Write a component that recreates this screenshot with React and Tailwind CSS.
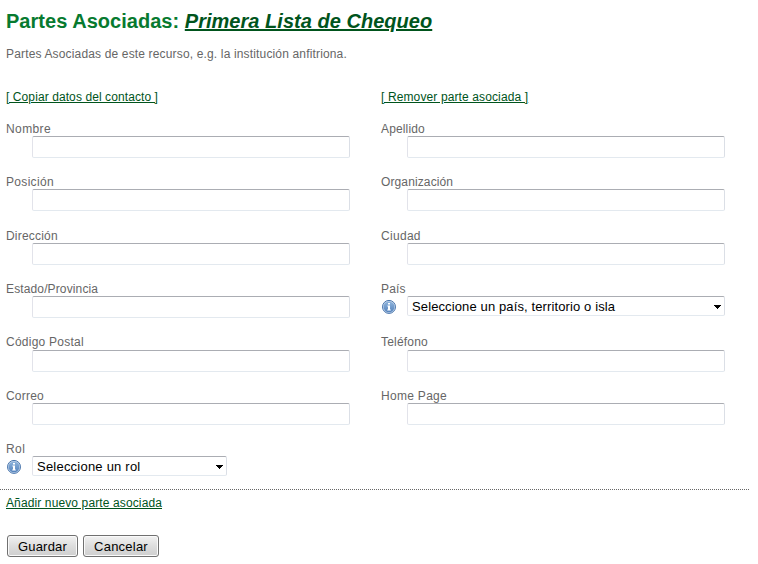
import React from "react";

function InfoIcon() {
  return (
    <svg className="mt-[3px] h-[15px] w-[15px] shrink-0" viewBox="0 0 15 15">
      <defs>
        <linearGradient id="info" x1="0" y1="0" x2="0" y2="1">
          <stop offset="0" stopColor="#8fb4dc" />
          <stop offset="1" stopColor="#5583bd" />
        </linearGradient>
      </defs>
      <circle cx="7" cy="7.9" r="6.5" fill="#c3d5ea" stroke="#4a76ad" strokeWidth="1" />
      <circle cx="7" cy="7.9" r="5.4" fill="url(#info)" />
      <path d="M6 4h2v1.6H6zM5.4 6.6H8v4h.8v.9H5.2v-.9H6V7.5h-.6z" fill="#fff" />
    </svg>
  );
}

function Label({ children, spacing = "", height = "h-[14px]" }) {
  return <div className={`whitespace-nowrap text-[12px] leading-[14px] text-[#666] ${height} ${spacing}`}>{children}</div>;
}

const fieldBorder = "rounded-[2px] border border-[#e2e3ea] border-t-[#abadb3] border-r-[#dbdfe6] border-b-[#e3e9ef] bg-white";

function Field({ label, spacing, labelHeight }) {
  return (
    <div className="w-[344px]">
      <Label spacing={spacing} height={labelHeight}>{label}</Label>
      <input className={`ml-[26px] block h-[22px] w-[318px] outline-none ${fieldBorder}`} />
    </div>
  );
}

function SelectField({ label, value, width, spacing, labelSpacing }) {
  return (
    <div className="w-[344px]">
      <Label spacing={labelSpacing}>{label}</Label>
      <div className="flex">
        <div className="flex w-[26px] pl-px">
          <InfoIcon />
        </div>
        <div className={`flex h-5 items-start justify-between pl-1 pr-[3px] text-black ${width} ${fieldBorder}`}>
          <span className={`whitespace-nowrap pt-px text-[13px] leading-[18px] ${spacing}`}>{value}</span>
          <svg className="mt-2 h-1 w-[7px]" viewBox="0 0 7 4" shapeRendering="crispEdges">
            <path d="M0 0h7v1H6v1H5v1H4v1H3V3H2V2H1V1H0z" />
          </svg>
        </div>
      </div>
    </div>
  );
}

function Button({ children, width }) {
  return (
    <button className={`h-[22px] rounded-[3px] border border-[#707070] bg-linear-to-b from-[#f2f2f2] from-0% via-[#dddddd] via-50% to-[#cfcfcf] text-[13px] leading-[19px] tracking-[0.22px] text-black shadow-[inset_0_0_0_1px_#fafafa] ${width}`}>
      {children}
    </button>
  );
}

const link = "whitespace-nowrap text-[12px] leading-[14px] text-[#00541c] underline";

export default function App() {
  return (
    <main className="h-[564px] w-[758px] overflow-hidden bg-white font-['Liberation_Sans',Arial,sans-serif]">
      <h1 className="ml-1.5 h-[47px] whitespace-nowrap pt-[9px] text-[20px] font-bold leading-6 tracking-[0.03px] text-[#077a2f]">
        Partes Asociadas: <a className="italic text-[#00541c] underline">Primera Lista de Chequeo</a>
      </h1>
      <p className="ml-1.5 h-[43px] whitespace-nowrap text-[12px] leading-[14px] tracking-[0.155px] text-[#666]">
        Partes Asociadas de este recurso, e.g. la institución anfitriona.
      </p>
      <div className="ml-1.5 grid h-8 grid-cols-[375px_344px]">
        <div className="flex"><a className={`${link} tracking-[0.09px]`}>[ Copiar datos del contacto ]</a></div>
        <div className="flex"><a className={`${link} tracking-[0.12px]`}>[ Remover parte asociada ]</a></div>
      </div>
      <form className="ml-1.5 grid grid-cols-[375px_344px] grid-rows-[53px_54px_53px_53px_54px_53px_47px]">
        <Field label="Nombre" spacing="tracking-[0.4px]" />
        <Field label="Apellido" spacing="tracking-[0.15px]" />
        <Field label="Posición" spacing="tracking-[0.32px]" />
        <Field label="Organización" spacing="tracking-[0.12px]" />
        <Field label="Dirección" spacing="tracking-[0.2px]" />
        <Field label="Ciudad" spacing="tracking-[0.3px]" />
        <Field label="Estado/Provincia" spacing="tracking-[0.13px]" />
        <SelectField label="País" value="Seleccione un país, territorio o isla" width="w-[318px]" spacing="tracking-[0.12px]" labelSpacing="tracking-[0.2px]" />
        <Field label="Código Postal" spacing="tracking-[0.25px]" labelHeight="h-[15px]" />
        <Field label="Teléfono" spacing="tracking-[0.2px]" labelHeight="h-[15px]" />
        <Field label="Correo" spacing="tracking-[0.2px]" />
        <Field label="Home Page" spacing="tracking-[0.3px]" />
        <SelectField label="Rol" value="Seleccione un rol" width="w-[195px]" spacing="tracking-[0.22px]" labelSpacing="tracking-[0.4px]" />
      </form>
      <div className="h-px w-[749px] bg-[repeating-linear-gradient(90deg,#666_0_1px,transparent_1px_2px)]" />
      <div className="ml-1.5 flex h-[45px] pt-[6px]"><a className={`${link} tracking-[0.12px]`}>Añadir nuevo parte asociada</a></div>
      <div className="ml-[7px] flex gap-[5px]">
        <Button width="w-[71px]">Guardar</Button>
        <Button width="w-[76px]">Cancelar</Button>
      </div>
    </main>
  );
}
